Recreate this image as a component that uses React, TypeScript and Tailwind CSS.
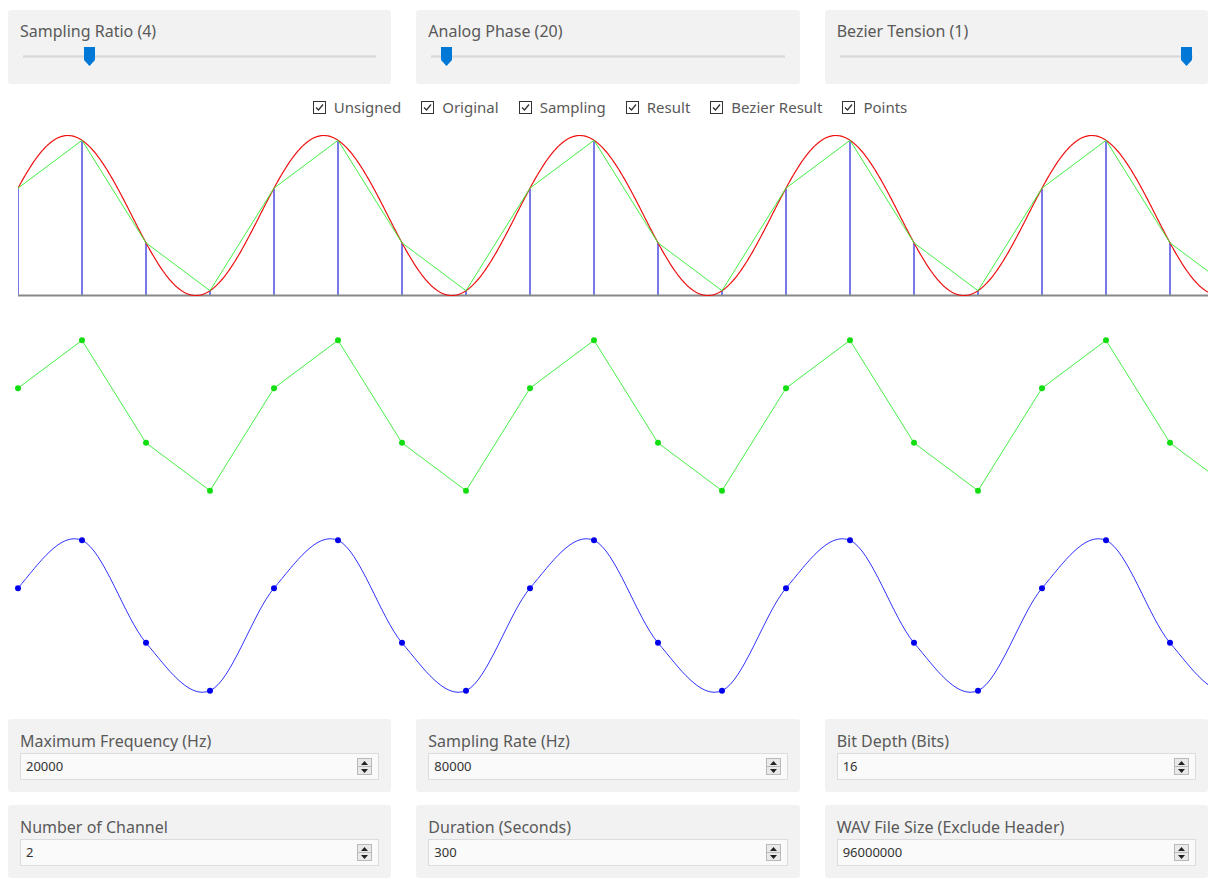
import React from 'react'

const FONT = '"Noto Sans", "Open Sans", Arial, sans-serif'

const AMP = 80
const X0 = 18
const X1 = 1208
const STEP = 64
const PHASE = (20 * Math.PI) / 180

// sample points (one extra on each side so splines leave the clip smoothly)
const samples = (cy: number) => {
  const pts: [number, number][] = []
  for (let k = -1; k <= 20; k++) {
    const x = X0 + STEP * k
    pts.push([x, cy - AMP * Math.sin(PHASE + (Math.PI / 2) * k)])
  }
  return pts
}

const sinePath = (cy: number) => {
  let d = ''
  for (let x = X0; x <= X1; x += 1) {
    const y = cy - AMP * Math.sin(PHASE + (2 * Math.PI * (x - X0)) / 256)
    d += (x === X0 ? 'M' : 'L') + x + ' ' + y.toFixed(2) + ' '
  }
  return d
}

const polyPath = (pts: [number, number][]) =>
  pts.map((p, i) => (i === 0 ? 'M' : 'L') + p[0] + ' ' + p[1].toFixed(2)).join(' ')

const splinePath = (pts: [number, number][], t = 1) => {
  let d = `M${pts[0][0]} ${pts[0][1].toFixed(2)}`
  for (let i = 0; i < pts.length - 1; i++) {
    const p0 = pts[Math.max(i - 1, 0)]
    const p1 = pts[i]
    const p2 = pts[i + 1]
    const p3 = pts[Math.min(i + 2, pts.length - 1)]
    const c1x = p1[0] + ((p2[0] - p0[0]) * t) / 6
    const c1y = p1[1] + ((p2[1] - p0[1]) * t) / 6
    const c2x = p2[0] - ((p3[0] - p1[0]) * t) / 6
    const c2y = p2[1] - ((p3[1] - p1[1]) * t) / 6
    d += ` C${c1x.toFixed(2)} ${c1y.toFixed(2)} ${c2x.toFixed(2)} ${c2y.toFixed(2)} ${p2[0]} ${p2[1].toFixed(2)}`
  }
  return d
}

const visible = (pts: [number, number][]) => pts.filter(p => p[0] >= X0 && p[0] <= X1)

function ClipDefs({ id, h }: { id: string; h: number }) {
  return (
    <defs>
      <clipPath id={id}>
        <rect x={X0} y={0} width={X1 - X0} height={h} />
      </clipPath>
    </defs>
  )
}

function OriginalChart() {
  const h = 197
  const cy = 97.5
  const pts = samples(cy)
  const base = cy + AMP
  return (
    <svg width="1216" height={h} className="block">
      <ClipDefs id="c1" h={h} />
      <g clipPath="url(#c1)">
        {visible(pts).map(p => (
          <line key={p[0]} x1={p[0]} x2={p[0]} y1={p[1]} y2={base} stroke="#7878ec" strokeWidth="2" />
        ))}
        <line x1={X0} x2={X1} y1={base} y2={base} stroke="#888888" strokeWidth="2" />
        <path d={sinePath(cy)} fill="none" stroke="#ee1111" strokeWidth="1.2" />
        <path d={polyPath(pts)} fill="none" stroke="#44ee44" strokeWidth="1" />
      </g>
    </svg>
  )
}

function SamplingChart() {
  const h = 200
  const pts = samples(100.5)
  return (
    <svg width="1216" height={h} className="block">
      <ClipDefs id="c2" h={h} />
      <path d={polyPath(pts)} fill="none" stroke="#44ee44" strokeWidth="1" clipPath="url(#c2)" />
      {visible(pts).map(p => (
        <circle key={p[0]} cx={p[0]} cy={p[1]} r="3" fill="#11dd11" />
      ))}
    </svg>
  )
}

function BezierChart() {
  const h = 200
  const pts = samples(100.5)
  return (
    <svg width="1216" height={h} className="block">
      <ClipDefs id="c3" h={h} />
      <path d={splinePath(pts, 1)} fill="none" stroke="#3333ff" strokeWidth="1" clipPath="url(#c3)" />
      {visible(pts).map(p => (
        <circle key={p[0]} cx={p[0]} cy={p[1]} r="3" fill="#0000ee" />
      ))}
    </svg>
  )
}

function SliderPanel({ label, pos }: { label: string; pos: number }) {
  return (
    <div className="rounded-[3px] bg-[#f2f2f2] px-3 pt-[11px] pb-3">
      <div className="text-[16px] leading-5 text-[#595959]">{label}</div>
      <div className="relative h-[31px]">
        <div className="absolute left-[3px] right-[3px] top-[14px] h-[3px] bg-[#d9d9d9] border-y border-[#e2e2e2]" />
        <svg
          width="11"
          height="19"
          viewBox="0 0 11 19"
          className="absolute top-[6px]"
          style={{ left: `calc(3px + (100% - 18px) * ${pos})` }}
        >
          <path d="M0 0H11V13L5.5 19L0 13Z" fill="#0078d7" />
        </svg>
      </div>
    </div>
  )
}

function Check({ label }: { label: string }) {
  return (
    <label className="flex items-center gap-2">
      <span className="w-[13px] h-[13px] border border-[#333] bg-white flex items-center justify-center">
        <svg width="9" height="9" viewBox="0 0 9 9">
          <path d="M1 4.5L3.5 7L8 1.5" fill="none" stroke="#333" strokeWidth="1.3" />
        </svg>
      </span>
      <span className="text-[15px] text-[#595959]">{label}</span>
    </label>
  )
}

function NumberPanel({ label, value }: { label: string; value: string }) {
  return (
    <div className="rounded-[3px] bg-[#f2f2f2] px-3 pt-3 pb-3">
      <div className="text-[16px] leading-5 text-[#595959]">{label}</div>
      <div className="mt-[2px] h-[27px] border border-[#dcdcdc] bg-[#fafafa] flex items-center justify-between pl-[5px] pr-[6px]">
        <span className="text-[13px] text-[#333]">{value}</span>
        <div className="w-[15px] h-[17px] border border-[#b9b9b9] bg-[#e9e9e9] flex flex-col">
          <div className="flex-1 flex items-center justify-center border-b border-[#b9b9b9]">
            <svg width="7" height="4" viewBox="0 0 7 4">
              <path d="M0 4L3.5 0L7 4Z" fill="#222" />
            </svg>
          </div>
          <div className="flex-1 flex items-center justify-center">
            <svg width="7" height="4" viewBox="0 0 7 4">
              <path d="M0 0L3.5 4L7 0Z" fill="#222" />
            </svg>
          </div>
        </div>
      </div>
    </div>
  )
}

export default function App() {
  return (
    <div className="w-[1216px] h-[892px] bg-white overflow-hidden" style={{ fontFamily: FONT }}>
      <div className="grid grid-cols-3 gap-[25px] px-2 pt-[10px]">
        <SliderPanel label="Sampling Ratio (4)" pos={61 / 342} />
        <SliderPanel label="Analog Phase (20)" pos={10 / 342} />
        <SliderPanel label="Bezier Tension (1)" pos={1} />
      </div>

      <div className="mt-3 h-[22px] flex items-center justify-center gap-5 pl-1">
        <Check label="Unsigned" />
        <Check label="Original" />
        <Check label="Sampling" />
        <Check label="Result" />
        <Check label="Bezier Result" />
        <Check label="Points" />
      </div>

      <OriginalChart />
      <SamplingChart />
      <BezierChart />

      <div className="mt-1 grid grid-cols-3 gap-x-[25px] gap-y-[13px] px-2">
        <NumberPanel label="Maximum Frequency (Hz)" value="20000" />
        <NumberPanel label="Sampling Rate (Hz)" value="80000" />
        <NumberPanel label="Bit Depth (Bits)" value="16" />
        <NumberPanel label="Number of Channel" value="2" />
        <NumberPanel label="Duration (Seconds)" value="300" />
        <NumberPanel label="WAV File Size (Exclude Header)" value="96000000" />
      </div>
    </div>
  )
}
